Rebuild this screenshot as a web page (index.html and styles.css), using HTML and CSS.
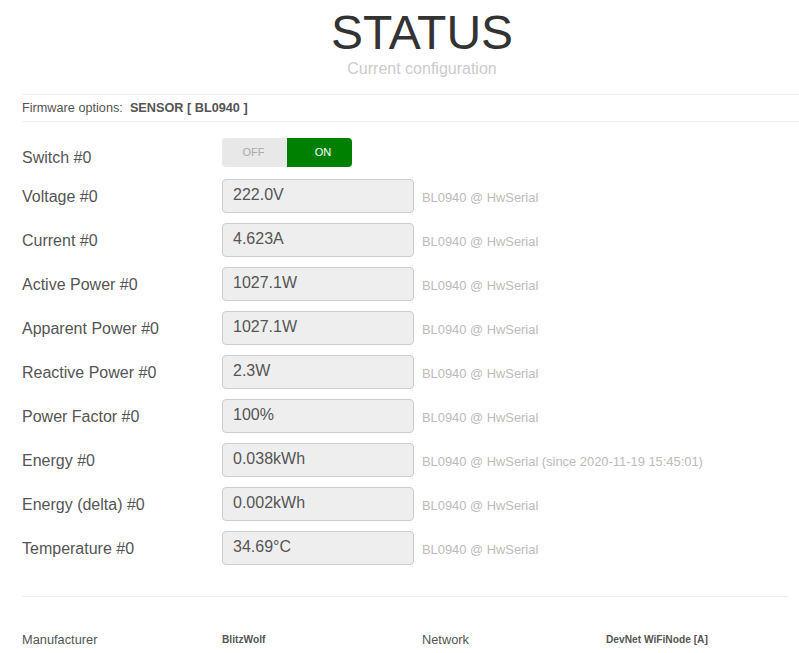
FILE: index.html
```html
<!DOCTYPE html>
<html>
<head>
<meta charset="utf-8">
<link rel="stylesheet" href="styles.css">
</head>
<body>
<div class="page">
  <header class="head">
    <h1 class="title">STATUS</h1>
    <div class="subtitle">Current configuration</div>
  </header>
  <div class="fw">Firmware options:&nbsp; <b>SENSOR [ BL0940 ]</b></div>
  <div class="rows">
    <div class="row row-switch">
      <div class="label">Switch #0</div>
      <div class="toggle"><span class="off">OFF</span><span class="on">ON</span></div>
    </div>
    <div class="row"><div class="label">Voltage #0</div><div class="field">222.0V</div><div class="help">BL0940 @ HwSerial</div></div>
    <div class="row"><div class="label">Current #0</div><div class="field">4.623A</div><div class="help">BL0940 @ HwSerial</div></div>
    <div class="row"><div class="label">Active Power #0</div><div class="field">1027.1W</div><div class="help">BL0940 @ HwSerial</div></div>
    <div class="row"><div class="label">Apparent Power #0</div><div class="field">1027.1W</div><div class="help">BL0940 @ HwSerial</div></div>
    <div class="row"><div class="label">Reactive Power #0</div><div class="field">2.3W</div><div class="help">BL0940 @ HwSerial</div></div>
    <div class="row"><div class="label">Power Factor #0</div><div class="field">100%</div><div class="help">BL0940 @ HwSerial</div></div>
    <div class="row"><div class="label">Energy #0</div><div class="field">0.038kWh</div><div class="help">BL0940 @ HwSerial (since 2020-11-19 15:45:01)</div></div>
    <div class="row"><div class="label">Energy (delta) #0</div><div class="field">0.002kWh</div><div class="help">BL0940 @ HwSerial</div></div>
    <div class="row"><div class="label">Temperature #0</div><div class="field">34.69°C</div><div class="help">BL0940 @ HwSerial</div></div>
  </div>
  <div class="footer">
    <div class="fk">Manufacturer</div><div class="fv">BlitzWolf</div>
    <div class="fk">Network</div><div class="fv">DevNet WiFiNode [A]</div>
  </div>
</div>
</body>
</html>
```
FILE: styles.css
```css
html, body {
  margin: 0;
  padding: 0;
  background: #fff;
  overflow: hidden;
}
body {
  font-family: "Liberation Sans", Arial, sans-serif;
  color: #555;
}
.page {
  padding-left: 22px;
}
.head {
  width: 800px;
  text-align: center;
  padding-top: 8px;
  height: 94px;
  box-sizing: border-box;
}
.title {
  margin: 0;
  font-size: 48px;
  font-weight: normal;
  line-height: 50px;
  color: #333;
}
.subtitle {
  font-size: 16px;
  line-height: 18px;
  color: #ccc;
  margin-top: 2px;
}
.fw {
  border-top: 1px solid #eee;
  border-bottom: 1px solid #eee;
  font-size: 12.7px;
  line-height: 27px;
  height: 26px;
  color: #555;
}
.fw b {
  font-weight: bold;
}
.rows {
  display: flex;
  flex-direction: column;
  gap: 10px;
  margin-top: 17px;
  width: 766px;
  padding-bottom: 31px;
  border-bottom: 1px solid #eee;
}
.row {
  display: flex;
  align-items: center;
  height: 34px;
}
.row-switch {
  height: 29px;
  align-items: flex-start;
  margin-bottom: 2px;
  margin-top: -1px;
}
.row-switch .label {
  margin-top: 9px;
  line-height: 20px;
}
.label {
  width: 200px;
  font-size: 16px;
  color: #555;
  padding-top: 1px;
}
.toggle {
  display: flex;
  width: 130px;
  height: 29px;
  border-radius: 4px;
  overflow: hidden;
  font-size: 11px;
}
.toggle span {
  flex: 0 0 65px;
  box-sizing: border-box;
  display: flex;
  align-items: center;
  justify-content: center;
  padding-bottom: 1px;
}
.toggle .off {
  background: #e8e8e8;
  color: #aaa;
  padding-right: 2px;
}
.toggle .on {
  background: #008000;
  color: #fff;
  padding-left: 7px;
}
.field {
  width: 192px;
  height: 34px;
  box-sizing: border-box;
  border: 1px solid #ccc;
  border-radius: 4px;
  background: #eee;
  font-size: 16px;
  line-height: 30px;
  padding: 0 10px;
  color: #555;
}
.help {
  margin-left: 8px;
  font-size: 12.9px;
  color: #bbb;
  padding-top: 2px;
}
.footer {
  display: grid;
  grid-template-columns: 200px 200px 184px auto;
  width: 766px;
  margin-top: 36px;
  align-items: center;
  line-height: 14px;
}
.fk {
  font-size: 12.8px;
  color: #555;
}
.fv {
  font-size: 10.2px;
  font-weight: bold;
  color: #555;
}
```
